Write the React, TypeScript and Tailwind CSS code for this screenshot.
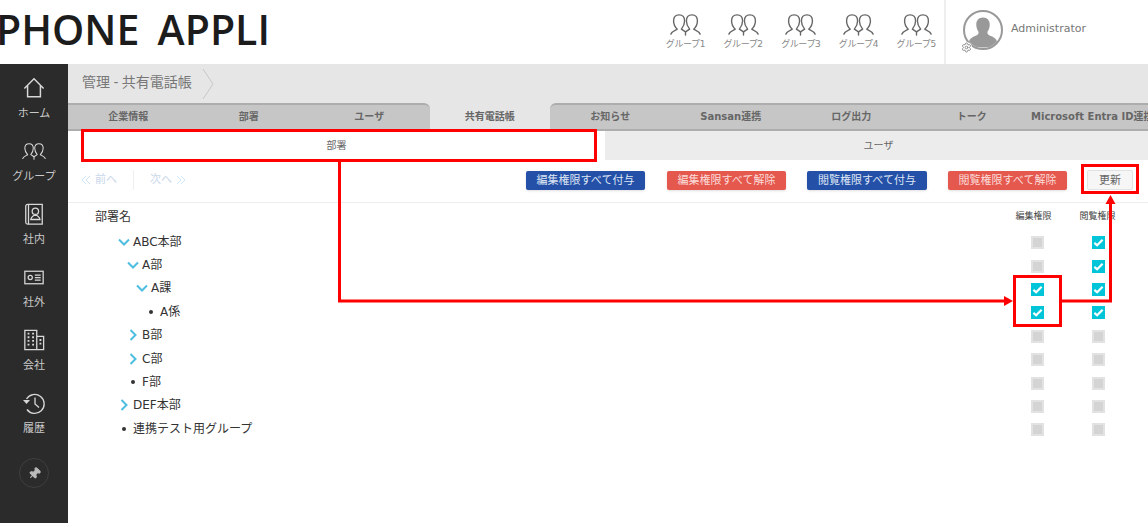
import React from 'react'
import { Pin, Settings } from 'lucide-react'

const FONT = 'font-["DejaVu_Sans","Noto_Sans_CJK_JP",sans-serif]'

const GroupIcon = ({ className }: { className?: string }) => (
  <svg viewBox="0 0 34 24" fill="none" stroke="currentColor" strokeWidth="1.5" strokeLinecap="round" strokeLinejoin="round" className={className}>
    <path d="M1 22c1-3 4.500-4 7-5.500C5.500 14 4 11 4 7.500 4 3.500 6.500 1 10 1s6 2.500 6 6.500c0 3.500-1.500 6.500-3.500 9L17 19.500V23" />
    <path d="M33 22c-1-3-4.500-4-7-5.500 2.500-2.500 4-5.500 4-9C30 3.500 27.500 1 24 1s-6 2.500-6 6.500c0 3.500 1.500 6.500 3.500 9L17 19.500" />
  </svg>
)

const HomeIcon = () => (
  <svg viewBox="0 0 24 24" fill="none" stroke="currentColor" strokeWidth="1.6" className="w-[22px] h-[22px]">
    <path d="M1.500 12.500 12 2l10.500 10.500M5 9.500V21.500h14V9.500" />
  </svg>
)

const BookIcon = () => (
  <svg viewBox="0 0 24 24" fill="none" stroke="currentColor" strokeWidth="1.4" className="w-[22px] h-[22px]">
    <path d="M3 3.500V21a2 2 0 0 0 2 2h16V1.500H5a2 2 0 0 0-2 2z" />
    <path d="M6 2v21" />
    <circle cx="13.500" cy="9" r="3.500" />
    <path d="M8.500 18c0-2.500 2.500-3.500 3.500-4.500h3c1 1 3.500 2 3.500 4.500z" />
  </svg>
)

const CardIcon = () => (
  <svg viewBox="0 0 24 18" fill="none" stroke="currentColor" strokeWidth="1.500" className="w-[22px] h-[15px]">
    <rect x="1" y="1.500" width="22" height="15" />
    <circle cx="7.500" cy="9" r="2.500" />
    <path d="M13 6h7M13 9h7M13 12h7" />
  </svg>
)

const BuildingIcon = () => (
  <svg viewBox="0 0 24 24" fill="none" stroke="currentColor" strokeWidth="1.400" className="w-[22px] h-[22px]">
    <path d="M2 1.500h13v21H2zM15 8h7.500v14.500H15" />
    <path d="M5 5h2M10 5h2M5 9h2M10 9h2M5 13h2M10 13h2M5 17h2M10 17h2M18 12h2M18 16h2" strokeWidth="2" />
  </svg>
)

const HistoryIcon = () => (
  <svg viewBox="0 0 24 24" fill="none" stroke="currentColor" strokeWidth="1.300" className="w-[24px] h-[24px]">
    <path d="M4.500 8A9.500 9.500 0 1 1 5 18.500" />
    <path d="M1 9h7L4.500 13z" fill="currentColor" stroke="none" />
    <path d="M13 6.500V13l4 3.500" />
  </svg>
)

const navItems = [
  { label: 'ホーム', icon: <HomeIcon /> },
  { label: 'グループ', icon: <GroupIcon className="w-[24px] h-[17px]" /> },
  { label: '社内', icon: <BookIcon /> },
  { label: '社外', icon: <CardIcon /> },
  { label: '会社', icon: <BuildingIcon /> },
  { label: '履歴', icon: <HistoryIcon /> },
]

const tabs = ['企業情報', '部署', 'ユーザ', '共有電話帳', 'お知らせ', 'Sansan連携', 'ログ出力', 'トーク', 'Microsoft Entra ID連携']

const Sidebar = () => (
  <div className="w-[68px] shrink-0 bg-[#2b2b2b] pt-[6px] flex flex-col items-center text-[#c9c9c9]">
    {navItems.map((item) => (
      <div key={item.label} className="h-[63px] w-full flex flex-col items-center">
        <div className="h-[36px] flex items-center justify-center text-[#d8d8d8]">{item.icon}</div>
        <div className="text-[11px] leading-[16px]">{item.label}</div>
      </div>
    ))}
    <div className="mt-[10px] w-[30px] h-[30px] rounded-full border border-[#3f3f3f] flex items-center justify-center">
      <Pin size={13} className="rotate-45 fill-[#bbbbbb] text-[#bbbbbb]" />
    </div>
  </div>
)

const Header = () => (
  <div className="h-[64px] bg-white flex items-center overflow-hidden">
    <div className="ml-[-4px] pb-[6px] text-[41px] leading-none font-semibold text-[#1c1c1c] font-['Open_Sans',sans-serif] whitespace-pre [word-spacing:-1.500px] flex-1">PHONE  APPLI</div>
    <div className="flex items-start mr-[-1px]">
      {[1, 2, 3, 4, 5].map((n) => (
        <div key={n} className="w-[57.700px] flex flex-col items-center text-[#666]">
          <GroupIcon className="w-[33px] h-[22px]" />
          <div className="text-[9px] leading-[14px] text-[#888] mt-[1px] tracking-[-0.4px] whitespace-nowrap">グループ{n}</div>
        </div>
      ))}
    </div>
    <div className="w-[204px] h-full border-l-2 border-[#eeeeee] flex items-center pl-[17px] pb-[5px] shrink-0">
      <div className="relative shrink-0">
        <div className="w-[40px] h-[40px] rounded-full border-2 border-[#999] overflow-hidden bg-white">
          <svg viewBox="0 0 40 40" className="w-full h-full text-[#999]" fill="currentColor">
            <path d="M20 6c5 0 7.500 3.500 7.500 8 0 3-1 6-2.500 8-.5 2 .5 3.500 3 4.500 4 1.500 7 3 8 8l-1 5H5l-1-5c1-5 4-6.500 8-8 2.500-1 3.500-2.500 3-4.500-1.500-2-2.500-5-2.500-8 0-4.500 2.500-8 7.500-8z" />
          </svg>
        </div>
        <Settings size={11} className="absolute left-[-2px] bottom-[-3px] bg-white rounded-full text-[#888]" />
      </div>
      <div className="ml-[8px] text-[11px] text-[#777]">Administrator</div>
    </div>
  </div>
)

const Breadcrumb = () => (
  <div className="h-[39px] bg-[#e6e6e6] flex items-center pl-[14px]">
    <span className="text-[14px] text-[#777] -translate-y-[2px] font-['Noto_Sans','Noto_Sans_CJK_JP',sans-serif]">管理 - 共有電話帳</span>
    <svg viewBox="0 0 12 32" fill="none" stroke="#c8c8c8" className="w-[12px] h-[32px] ml-[10px]">
      <path d="M1 1l10 15L1 31" />
    </svg>
  </div>
)

const Tabs = () => (
  <div className="h-[28px] bg-[#e6e6e6] flex overflow-hidden">
    {tabs.map((t, i) => (
      <div
        key={t}
        className={
          i === 3
            ? 'w-[120.500px] shrink-0 flex items-center justify-center text-[10px] font-bold text-[#666] whitespace-nowrap'
            : i === 2
              ? 'w-[120.500px] shrink-0 bg-[#c6c6c6] border-y-2 border-[#adadad] rounded-tr-[6px] flex items-center justify-center text-[10px] font-bold text-[#666] whitespace-nowrap'
              : i === 4
                ? 'w-[120.500px] shrink-0 bg-[#c6c6c6] border-y-2 border-[#adadad] rounded-tl-[6px] flex items-center justify-center text-[10px] font-bold text-[#666] whitespace-nowrap'
                : 'w-[120.500px] shrink-0 bg-[#c6c6c6] border-y-2 border-[#adadad] flex items-center justify-center text-[10px] font-bold text-[#666] whitespace-nowrap'
        }
      >
        <span className="-translate-y-px">{t}</span>
      </div>
    ))}
  </div>
)

const DoubleChevron = ({ dir }: { dir: 'left' | 'right' }) => (
  <svg viewBox="0 0 10 10" fill="none" stroke="#cfe6f5" strokeWidth="1" className="w-[10px] h-[10px]">
    <path d={dir === 'left' ? 'M5 1L1 5l4 4M9 1L5 5l4 4' : 'M1 1l4 4-4 4M5 1l4 4-4 4'} />
  </svg>
)

const Toolbar = () => (
  <div className="h-[43px] border-b border-[#eeeeee] flex items-center pl-[13px] pr-[15px] pb-[2px]">
    <div className="flex items-center text-[11px] text-[#c9d6ea]">
      <DoubleChevron dir="left" />
      <span className="ml-[4px]">前へ</span>
      <span className="w-px h-[20px] bg-[#eeeeee] mx-[16px]" />
      <span>次へ</span>
      <span className="ml-[4px]"><DoubleChevron dir="right" /></span>
    </div>
    <div className="ml-auto flex items-center">
      <button className="w-[119px] h-[19px] rounded-[2px] bg-[#2450a8] text-[#dfe6f4] text-[11px] leading-[17px] shadow-sm">編集権限すべて付与</button>
      <button className="w-[119px] h-[19px] rounded-[2px] bg-[#e5584e] text-[#fbdcd9] text-[11px] leading-[17px] shadow-sm ml-[22px]">編集権限すべて解除</button>
      <button className="w-[120px] h-[19px] rounded-[2px] bg-[#2450a8] text-[#dfe6f4] text-[11px] leading-[17px] shadow-sm ml-[21px]">閲覧権限すべて付与</button>
      <button className="w-[119px] h-[19px] rounded-[2px] bg-[#e5584e] text-[#fbdcd9] text-[11px] leading-[17px] shadow-sm ml-[21px]">閲覧権限すべて解除</button>
      <button className="w-[46px] h-[20px] rounded-[2px] bg-[#f6f6f6] border border-[#e2e2e2] text-[#666] text-[11px] leading-[17px] ml-[20px]">更新</button>
    </div>
  </div>
)

const Check = ({ on }: { on?: boolean }) => on ? (
  <div className="w-[13px] h-[13px] bg-[#00c4d8] flex items-center justify-center">
    <svg viewBox="0 0 12 12" fill="none" stroke="white" strokeWidth="2.400" className="w-[11px] h-[11px]">
      <path d="M1.500 6.500l3 2.500L10.500 3" />
    </svg>
  </div>
) : (
  <div className="w-[13px] h-[13px] bg-[#d4d4d4] border-2 border-[#e2e2e2]" />
)

type Row = { label: string; indent: number; kind: 'open' | 'closed' | 'leaf'; edit?: boolean; view?: boolean }

const rows: Row[] = [
  { label: 'ABC本部', indent: 50, kind: 'open', view: true },
  { label: 'A部', indent: 59, kind: 'open', view: true },
  { label: 'A課', indent: 68, kind: 'open', edit: true, view: true },
  { label: 'A係', indent: 77, kind: 'leaf', edit: true, view: true },
  { label: 'B部', indent: 59, kind: 'closed' },
  { label: 'C部', indent: 59, kind: 'closed' },
  { label: 'F部', indent: 59, kind: 'leaf' },
  { label: 'DEF本部', indent: 50, kind: 'closed' },
  { label: '連携テスト用グループ', indent: 50, kind: 'leaf' },
]

const TreeMark = ({ kind }: { kind: Row['kind'] }) => {
  if (kind === 'leaf') return <span className="w-[4px] h-[4px] rounded-full bg-[#333] mx-[4px]" />
  return (
    <svg viewBox="0 0 12 12" fill="none" stroke="#4dbde0" strokeWidth="2" className="w-[12px] h-[12px]">
      <path d={kind === 'open' ? 'M1 3.500l5 5 5-5' : 'M3.500 1l5 5-5 5'} />
    </svg>
  )
}

const Tree = () => (
  <div className="pr-[19px]">
    <div className="h-[28px] flex items-center text-[12px] text-[#333] pl-[27px]">
      <span className="flex-1">部署名</span>
      <span className="w-[61px] text-[9px] text-[#444] text-center pr-[8px]">編集権限</span>
      <span className="w-[61px] text-[9px] text-[#444] text-center pr-[2px]">閲覧権限</span>
    </div>
    {rows.map((r) => (
      <div key={r.label} className="h-[23.400px] flex items-center text-[12px] text-[#333]">
        <div className="flex-1 flex items-center -translate-y-px" style={{ paddingLeft: r.indent }}>
          <TreeMark kind={r.kind} />
          <span className="ml-[3px]">{r.label}</span>
        </div>
        <div className="w-[61px] flex justify-center"><Check on={r.edit} /></div>
        <div className="w-[61px] flex justify-center"><Check on={r.view} /></div>
      </div>
    ))}
  </div>
)

const Annotations = () => (
  <>
    <div className="absolute left-[81px] top-[129px] w-[516px] h-[33px] border-[3px] border-[#ff0000]" />
    <div className="absolute left-[1081px] top-[164px] w-[58px] h-[30px] border-[3px] border-[#ff0000]" />
    <div className="absolute left-[1013px] top-[275px] w-[49px] h-[52px] border-[3px] border-[#ff0000]" />
    <svg className="absolute left-0 top-0 w-[1148px] h-[523px] pointer-events-none" viewBox="0 0 1148 523" fill="none">
      <path d="M339.500 162V301H1006" stroke="#ff0000" strokeWidth="3" />
      <path d="M1004 296l9 5-9 5z" fill="#ff0000" />
      <path d="M1061 301H1110.500V203" stroke="#ff0000" strokeWidth="3" />
      <path d="M1105.500 204l5-9 5 9z" fill="#ff0000" />
    </svg>
  </>
)

export default function App() {
  return (
    <div className={`relative w-[1148px] h-[523px] overflow-hidden bg-white ${FONT}`}>
      <Header />
      <div className="flex h-[459px]">
        <Sidebar />
        <div className="flex-1 min-w-0">
          <Breadcrumb />
          <Tabs />
          <div className="h-[29px] flex text-[10px] text-[#666]">
            <div className="w-[537px] flex items-center justify-center bg-white">部署</div>
            <div className="flex-1 pl-[4px] flex items-center justify-center bg-[#ececec]">ユーザ</div>
          </div>
          <Toolbar />
          <Tree />
        </div>
      </div>
      <Annotations />
    </div>
  )
}
